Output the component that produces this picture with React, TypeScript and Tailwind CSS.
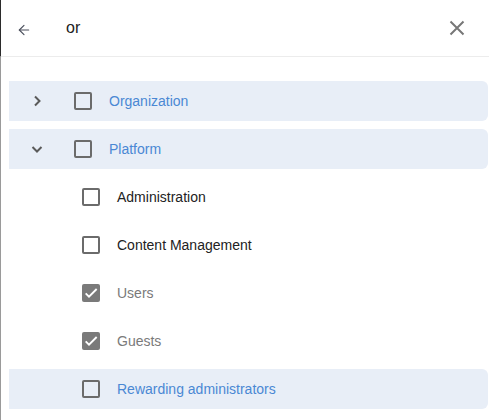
import { ArrowLeft } from "lucide-react";

type Item = {
  label: string;
  level: 0 | 1;
  expanded?: boolean;
  checked?: boolean;
  disabled?: boolean;
  match?: boolean;
};

const items: Item[] = [
  { label: "Organization", level: 0, expanded: false, match: true },
  { label: "Platform", level: 0, expanded: true, match: true },
  { label: "Administration", level: 1 },
  { label: "Content Management", level: 1 },
  { label: "Users", level: 1, checked: true, disabled: true },
  { label: "Guests", level: 1, checked: true, disabled: true },
  { label: "Rewarding administrators", level: 1, match: true },
];

function Checkbox({ checked }: { checked?: boolean }) {
  if (checked) {
    return (
      <span className="w-[18px] h-[18px] rounded-[2px] bg-[#7a7a7a] flex items-center justify-center shrink-0">
        <svg width="16" height="16" viewBox="0 0 24 24" fill="none">
          <path d="M4 12.5l5 5L20.5 6" stroke="#fff" strokeWidth="2.8" />
        </svg>
      </span>
    );
  }
  return <span className="block w-[18px] h-[18px] rounded-[2px] border-2 border-[#6b6b6b] shrink-0" />;
}

function Chevron({ open }: { open?: boolean }) {
  return (
    <span className="w-6 h-6 flex items-center justify-center shrink-0">
      <svg width="24" height="24" viewBox="0 0 24 24" fill="none">
        {open ? (
          <path d="M7.5 10l4.5 4.5 4.5-4.5" stroke="#5a5a5a" strokeWidth="2" />
        ) : (
          <path d="M10 7.5l4.5 4.5-4.5 4.5" stroke="#5a5a5a" strokeWidth="2" />
        )}
      </svg>
    </span>
  );
}

export default function App() {
  return (
    <div
      className="w-full h-[420px] bg-white flex flex-col"
      style={{ fontFamily: '"Liberation Sans", Arial, sans-serif' }}
    >
      {/* search header */}
      <div className="h-[57px] shrink-0 flex items-center border-l border-[#2b2b2b] border-b border-b-[#ececec]">
        <span className="w-[49px] pl-[15px] pt-[4px] flex items-center">
          <ArrowLeft size={16} strokeWidth={1.7} color="#4a4f5c" />
        </span>
        <span className="pl-[16px] text-[16px] text-[#222] pb-[1px]">or</span>
        <span className="ml-auto mr-[24px] flex items-center">
          <svg width="16" height="16" viewBox="0 0 16 16" fill="none">
            <path d="M1.5 1.5l13 13M14.5 1.5l-13 13" stroke="#777" strokeWidth="2" />
          </svg>
        </span>
      </div>

      {/* tree */}
      <div className="flex-1 border-l border-[#9a9a9a] pl-2 pr-px pt-6 flex flex-col gap-2">
        {items.map((it) => (
          <div
            key={it.label}
            className={`h-10 flex items-center rounded-r-[6px] text-[14px] ${
              it.match ? "bg-[#e8eef7]" : ""
            } ${it.level === 0 ? "pl-4" : "pl-[73px]"}`}
          >
            {it.level === 0 && <Chevron open={it.expanded} />}
            <span className={`flex ${it.level === 0 ? "ml-[25px]" : ""}`}>
              <Checkbox checked={it.checked} />
            </span>
            <span
              className={`ml-[17px] ${
                it.match ? "text-[#4a88d4]" : it.disabled ? "text-[#7a7a7a]" : "text-[#222]"
              }`}
            >
              {it.label}
            </span>
          </div>
        ))}
      </div>
    </div>
  );
}
